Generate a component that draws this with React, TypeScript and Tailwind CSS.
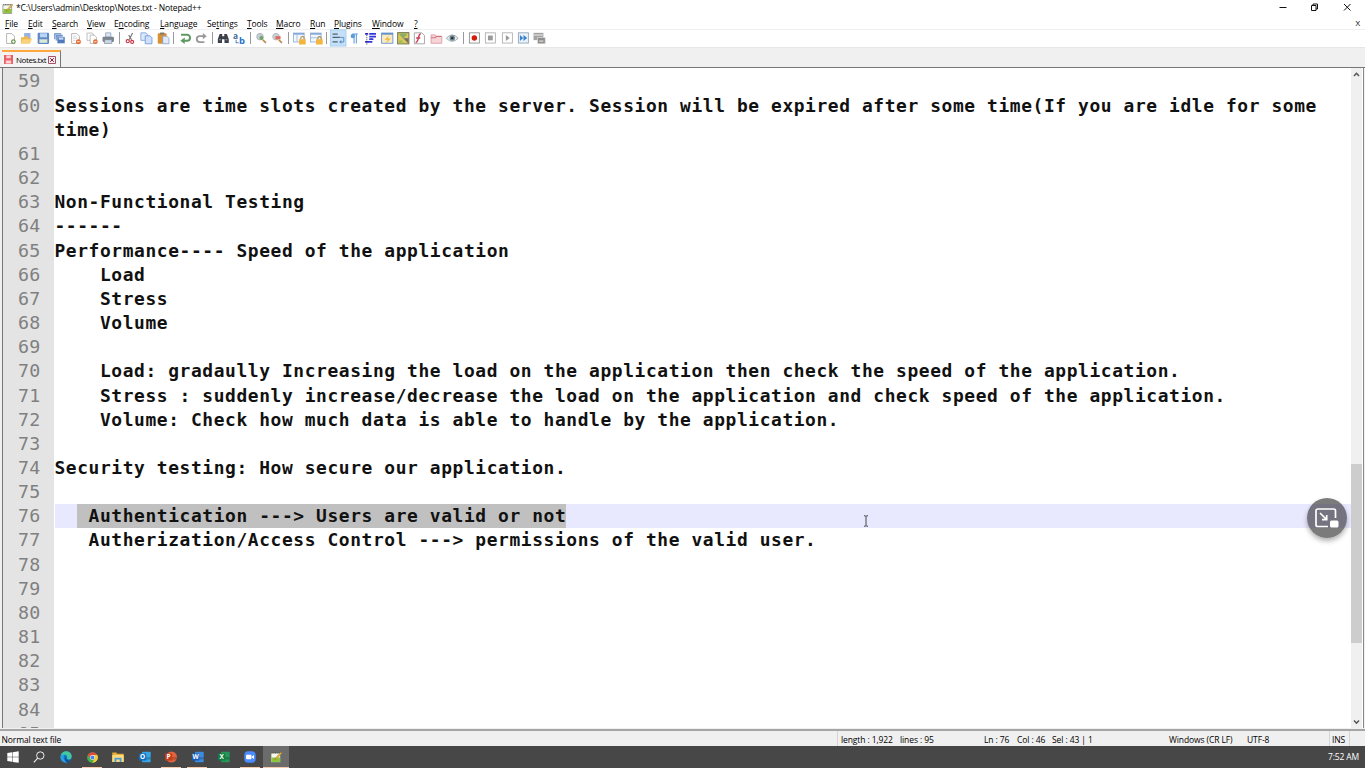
import type { ReactNode } from 'react';

type Line = { n?: number; text?: string; pre?: string; sel?: string };

const lines: Line[] = [
  { n: 59 },
  { n: 60, text: 'Sessions are time slots created by the server. Session will be expired after some time(If you are idle for some' },
  { text: 'time)' },
  { n: 61 },
  { n: 62 },
  { n: 63, text: 'Non-Functional Testing' },
  { n: 64, text: '------' },
  { n: 65, text: 'Performance---- Speed of the application' },
  { n: 66, text: '    Load' },
  { n: 67, text: '    Stress' },
  { n: 68, text: '    Volume' },
  { n: 69 },
  { n: 70, text: '    Load: gradaully Increasing the load on the application then check the speed of the application.' },
  { n: 71, text: '    Stress : suddenly increase/decrease the load on the application and check speed of the application.' },
  { n: 72, text: '    Volume: Check how much data is able to handle by the application.' },
  { n: 73 },
  { n: 74, text: 'Security testing: How secure our application.' },
  { n: 75 },
  { n: 76, pre: '  ', sel: ' Authentication ---> Users are valid or not' },
  { n: 77, text: '   Autherization/Access Control ---> permissions of the valid user.' },
  { n: 78 },
  { n: 79 },
  { n: 80 },
  { n: 81 },
  { n: 82 },
  { n: 83 },
  { n: 84 },
  { n: 85 },
];

const menus: { before?: string; key: string; after?: string; cls: string }[] = [
  { key: 'F', after: 'ile', cls: 'w-[23px]' },
  { key: 'E', after: 'dit', cls: 'w-[24px]' },
  { key: 'S', after: 'earch', cls: 'w-[35px]' },
  { key: 'V', after: 'iew', cls: 'w-[27px]' },
  { before: 'E', key: 'n', after: 'coding', cls: 'w-[46px]' },
  { key: 'L', after: 'anguage', cls: 'w-[47px]' },
  { before: 'Se', key: 't', after: 'tings', cls: 'w-[40px]' },
  { key: 'T', after: 'ools', cls: 'w-[29px]' },
  { key: 'M', after: 'acro', cls: 'w-[34px]' },
  { key: 'R', after: 'un', cls: 'w-[24px]' },
  { key: 'P', after: 'lugins', cls: 'w-[38px]' },
  { key: 'W', after: 'indow', cls: 'w-[42px]' },
  { key: '?', cls: 'w-[10px]' },
];

const page = <path d="M2.5 1.5h5l2.5 2.5v7h-7.5z" fill="#fff" stroke="#a9a9a9" strokeWidth=".8" />;
const lock = (
  <>
    <path d="M7.500 7.500V6a1.600 1.600 0 0 1 3.200 0v1.500" fill="none" stroke="#a98b4a" />
    <rect x="5.800" y="7" width="6.400" height="5" fill="#f3b63c" />
  </>
);

const icons: (ReactNode | null)[] = [
  <>{page}<circle cx="9" cy="9.300" r="2.300" fill="#6f9a58" /><path d="M9 8v2.600M7.700 9.300h2.600" stroke="#fff" strokeWidth=".8" /></>,
  <><path d="M4 1h6v7H4z" fill="#8fb2e8" /><path d="M1 5h3l1-1h3v2h3l-1.500 5H1z" fill="#f0b84c" /><path d="M2.500 7H11.500l-2 4H1z" fill="#f9d27d" /></>,
  <><rect x=".6" y=".8" width="11" height="10.600" rx="1" fill="#5f88c8" /><rect x="2.800" y="1.300" width="6.800" height="3.800" fill="#b9d6f3" /><rect x="2.300" y="7" width="7.600" height="3.400" fill="#dce9d2" /></>,
  <><rect x="1" y="1" width="7" height="6" rx=".6" fill="#7fa2d8" /><rect x="2.500" y="2.500" width="7" height="6" rx=".6" fill="#6a90cd" stroke="#fff" strokeWidth=".4" /><rect x="4" y="4.500" width="7.500" height="6.500" rx=".6" fill="#5079bb" stroke="#fff" strokeWidth=".4" /><rect x="5.500" y="5.200" width="4.500" height="2.200" fill="#c5daf2" /></>,
  <>{page}<path d="M4 4h3M4 6h4M4 8h2" stroke="#c3c3c3" strokeWidth=".7" /><circle cx="9" cy="9.300" r="2.400" fill="#e2713b" /><path d="M7.800 9.300h2.400" stroke="#fff" strokeWidth=".8" /></>,
  <><path d="M1 1h5l1 1v6H1z" fill="#fff" stroke="#aaa" strokeWidth=".7" /><path d="M4 3h4l2 2v6H4z" fill="#fff" stroke="#aaa" strokeWidth=".7" /><circle cx="9" cy="9.300" r="2.300" fill="#e2713b" /><path d="M7.900 9.300h2.200" stroke="#fff" strokeWidth=".8" /></>,
  <><path d="M3.500 .8h5v4h-5z" fill="#d9e7f6" stroke="#8897aa" strokeWidth=".7" /><rect x=".5" y="4.500" width="11" height="5" rx="1" fill="#7c858f" /><rect x="2.500" y="7.500" width="7" height="3.500" fill="#c9d7e8" stroke="#7c858f" strokeWidth=".6" /></>,
  null,
  <><path d="M8.200 1 5 7.500M4.500 3l2.800 4.500" stroke="#777" strokeWidth="1.100" /><circle cx="3.600" cy="8.800" r="1.500" fill="none" stroke="#cc3344" strokeWidth="1.100" /><circle cx="7.800" cy="9.500" r="1.400" fill="none" stroke="#cc3344" strokeWidth="1.100" /></>,
  <><path d="M.8.800h5l1.500 1.500V8H.8z" fill="#dce8fa" stroke="#7ea1dc" strokeWidth=".8" /><path d="M5 3.700h4.700L11.500 5.500v5.800H5z" fill="#cfe0fa" stroke="#6e95d6" strokeWidth=".8" /></>,
  <><rect x=".7" y="1.200" width="8.500" height="10" rx="1" fill="#d99136" /><rect x="3" y=".5" width="4" height="2" fill="#80796c" /><path d="M5.500 4h4l2 2v5.300h-6z" fill="#e1ecfb" stroke="#7d9bc7" strokeWidth=".7" /></>,
  null,
  <><path d="M2 2.700h5.800a2.800 2.800 0 0 1 0 5.600H4.500" fill="none" stroke="#5c9a61" strokeWidth="1.900" /><path d="M5.500 5.300v6.200L1.300 8.400z" fill="#5c9a61" /></>,
  <><path d="M9 9.700H4.600a2.900 2.900 0 0 1 0-5.800H8" fill="none" stroke="#999" strokeWidth="1.800" /><path d="M7.500 1 11.300 4 7.500 7z" fill="#999" /></>,
  null,
  <><path d="M2.500 2h2.500v2h2V2h2.500l1.800 5v3.500H7.200V7H4.800v3.500H.8V7z" fill="#3c4149" /><path d="M2.200 7.500h1.500M8.300 7.500h1.500" stroke="#a5b0bb" /></>,
  <><text x="0" y="6.500" fontSize="8" fontWeight="700" fill="#3f6d9b">a</text><text x="5.800" y="11.500" fontSize="9" fontWeight="700" fill="#2673c9">b</text><path d="M3 7.500v2.800h2.500" fill="none" stroke="#4a90d0" /></>,
  null,
  <><circle cx="4.800" cy="4.500" r="3.200" fill="#bfcbd6" stroke="#b5b5b5" strokeWidth=".8" /><circle cx="6.200" cy="5.800" r="1.900" fill="#6fa565" /><path d="m7.500 7.500 3 3" stroke="#c08a4e" strokeWidth="1.600" /></>,
  <><circle cx="4.800" cy="4.500" r="3.200" fill="#c9d2dc" stroke="#b5b5b5" strokeWidth=".8" /><path d="M4.200 4h5v3h-5z" fill="#df6a60" /><path d="m7.500 7.500 3 3" stroke="#c08a4e" strokeWidth="1.600" /></>,
  null,
  <><rect x=".5" y="1" width="10.200" height="8.600" fill="#f2f6fb" stroke="#8fb0da" strokeWidth=".8" /><path d="M.5 1.800h10.200" stroke="#7aa0d4" strokeWidth="1.400" /><path d="M3.800 2v7" stroke="#9db9dd" strokeWidth=".8" />{lock}</>,
  <><rect x=".5" y="1" width="10.200" height="8.600" fill="#f2f6fb" stroke="#8fb0da" strokeWidth=".8" /><path d="M.5 1.800h10.200" stroke="#7aa0d4" strokeWidth="1.400" /><path d="M.5 5.500h9" stroke="#9db9dd" strokeWidth=".8" />{lock}</>,
  null,
  <><rect x="-1.600" y="-2" width="15" height="15.500" fill="#c5e0f8" stroke="#9acbf4" strokeWidth=".8" /><path d="M.5 2h5M.5 5.200h7M.5 9.500h5" stroke="#53616f" strokeWidth="1.200" /><path d="M7.500 5.200h3.800v4.400H8.500" fill="none" stroke="#5a8cc0" strokeWidth=".9" /><path d="M9 7.700v3.600L6.800 9.600z" fill="#5a8cc0" /></>,
  <><path d="M5.800 1.500v9.500M8 1.500v9.500M4 2h5.500" stroke="#5b9bd8" strokeWidth="1" /><circle cx="4.600" cy="3.900" r="2.100" fill="#5b9bd8" /></>,
  <><path d="M1 1.800h3M5 1.800h6.500M5 4.400h6.500M5 6.900h4M1 9.500h7" stroke="#3434dd" strokeWidth="1.600" /><path d="M2.700 1v11" stroke="#222" strokeWidth=".8" strokeDasharray="1 1" /></>,
  <><rect x=".6" y="1" width="10.800" height="9.800" fill="#f8eac5" stroke="#5d8dcb" strokeWidth=".8" /><path d="M.6 1.800h10.800" stroke="#5d8dcb" strokeWidth="1.500" /><path d="m7.500 3.500-4 4h3L4.500 11l5-4.800h-3z" fill="#f1b735" /></>,
  <><rect x=".6" y=".6" width="10.800" height="10.800" fill="#d8c75b" stroke="#777c54" /><path d="m1.500 1.500 4.500 5 4-5" fill="#8aab66" /><path d="m6 6 5 5V6z" fill="#776d62" /><path d="M2 8h3v3H2z" fill="#a2bd58" /></>,
  <><path d="M1.300 .8h7.200L11 3.300v8H1.300z" fill="#fff" stroke="#999" strokeWidth=".8" /><path d="M7.500 2C4.500 1.500 6 10 2.500 10M3 5.800h4" fill="none" stroke="#cc4055" strokeWidth="1.400" /></>,
  <><path d="M1 2.800h4l1 1.200h5.300v6.800H1z" fill="#f6d5d8" stroke="#d9959d" strokeWidth=".8" /><path d="M1 5.600h4l1-1.200h5" fill="none" stroke="#d07580" /></>,
  <><path d="M.3 6Q6-.500 11.700 6 6 12 .3 6z" fill="#e9edef" stroke="#a2a8ad" strokeWidth=".9" /><circle cx="6" cy="5.800" r="2.600" fill="#66808e" /><circle cx="6" cy="5.800" r="1.100" fill="#222" /></>,
  null,
  <><rect x="1.300" y=".8" width="9.600" height="9.800" fill="#fff" stroke="#888" strokeWidth=".8" /><circle cx="6.100" cy="5.700" r="2.600" fill="#d61c0c" /></>,
  <><rect x="1.300" y=".8" width="9.600" height="9.800" fill="#fff" stroke="#aaa" strokeWidth=".8" /><rect x="3.800" y="3.400" width="4.600" height="4.600" fill="#999" /></>,
  <><rect x="1.300" y=".8" width="9.600" height="9.800" fill="#fff" stroke="#aaa" strokeWidth=".8" /><path d="M4.700 2.800v5.800l3.600-2.900z" fill="#999" /></>,
  <><rect x="1.300" y=".8" width="9.600" height="9.800" fill="#e9f3fc" stroke="#8a9db0" strokeWidth=".8" /><path d="M2.800 2.800v5.800L6 5.700zM6.200 2.800v5.800l3.600-2.900z" fill="#3b82cb" /></>,
  <><path d="M.5 .8h9.500v7H.5z" fill="#a3a3a3" /><path d="M.8 2.900h9" stroke="#e9e9e9" /><path d="M4.300 5.300h7.500v6H4.300z" fill="#8e8e8e" stroke="#e9e9e9" strokeWidth=".6" /><path d="M6 8.700h4" stroke="#eee" /></>,
];

function OfficeIcon({ letter, back, front }: { letter: string; back: string; front: string }) {
  return (
    <svg viewBox="0 0 12 12" className="size-3">
      {letter === 'P' ? <circle cx="6.500" cy="6" r="5.500" fill={back} /> : <rect x="3" y=".8" width="8.700" height="10.400" rx=".8" fill={back} />}
      <path d="M7 6h4.700v2.600H7z" fill="#000" opacity=".18" />
      <rect x="0" y="2.500" width="7.200" height="7" rx=".6" fill={front} />
      <text x="3.600" y="8.300" textAnchor="middle" fontSize="6.500" fontWeight="700" fill="#fff">{letter}</text>
    </svg>
  );
}

function NoteIcon({ className }: { className: string }) {
  return (
    <svg viewBox="0 0 12 12" className={className}>
      <path d="M1 2h9.500v9.500H1z" fill="#f7f7ee" stroke="#69705f" strokeWidth=".7" />
      <path d="M1.400 6.500h8.700V11H1.400z" fill="#8cc63f" />
      <path d="M1.500 1.800h8" stroke="#555" strokeDasharray="1 .8" />
      <path d="m11 1-5.500 6-1 2 2-.8L12 2z" fill="#efbd3e" stroke="#7a5a20" strokeWidth=".4" />
    </svg>
  );
}

const apps: { icon: ReactNode; cls: string }[] = [
  {
    icon: (
      <svg viewBox="0 0 12 12" className="size-3">
        <path d="m.3 2 4.900-.7v4.400H.3zM5.700 1.200 11.700.3v5.400h-6zM.3 6.200h4.900v4.500L.3 10zM5.700 6.200h6v5.500l-6-.8z" fill="#fff" />
      </svg>
    ),
    cls: 'w-[26px]',
  },
  {
    icon: (
      <svg viewBox="0 0 12 12" className="size-3">
        <circle cx="7.300" cy="4.500" r="3.700" fill="none" stroke="#eee" strokeWidth="1" />
        <path d="M4.700 7.200.8 11.400" stroke="#eee" strokeWidth="1.100" />
      </svg>
    ),
    cls: 'w-[26px]',
  },
  {
    icon: (
      <svg viewBox="0 0 12 12" className="size-3">
        <circle cx="6" cy="6" r="5.700" fill="#1476c6" />
        <path d="M.5 5.500C1 2 3.500.3 6.200.3c3.500 0 5.600 2.700 5.500 5.200-.1 2-1.500 2.800-3.200 2.800-1.500 0-1.900-.7-1.500-1.300C8 5.300 6 3.500 4 3.700 2.500 3.800 1 4.600.5 5.500z" fill="#42c8a1" />
        <path d="M.5 5.500C1.300 3.800 3 3.400 4.500 3.800 2.800 5.500 3.500 9.500 7.500 11.500 3.500 12 0 9.500.5 5.500z" fill="#2aa0e6" />
        <path d="M6.500 5.800c-1.500 2 .5 4 4 3.200-1 1.600-2.200 2.400-3.500 2.500-2.500-1.400-3-4.500-.5-5.700z" fill="#0f4f99" />
      </svg>
    ),
    cls: 'w-[27px]',
  },
  {
    icon: (
      <svg viewBox="0 0 12 12" className="size-[11px]">
        <circle cx="6" cy="6" r="5.800" fill="#4caf50" />
        <path d="M1 3.100A5.800 5.800 0 0 1 11.200 3.300H6L3.600 7.400z" fill="#e34a3b" />
        <path d="M11.200 3.300A5.800 5.800 0 0 1 5.800 11.800L8.400 7.400 6 3.300z" fill="#fbc934" />
        <circle cx="6" cy="6" r="2.700" fill="#fff" />
        <circle cx="6" cy="6" r="2.100" fill="#4285f4" />
      </svg>
    ),
    cls: 'w-[26px]',
  },
  {
    icon: (
      <svg viewBox="0 0 12 12" className="size-3">
        <path d="M.3 1.500h4l1 1.200h6.400V11H.3z" fill="#e8ae35" />
        <path d="M.3 4h11.400v7H.3z" fill="#fbdb7b" />
        <path d="M2.500 6.700h7V11H7.700V8.500H4.300V11H2.500z" fill="#4e9bd8" />
      </svg>
    ),
    cls: 'w-[26px]',
  },
  { icon: <OfficeIcon letter="O" back="#35a5e8" front="#0f6cbd" />, cls: 'w-[27px]' },
  { icon: <OfficeIcon letter="P" back="#e2633f" front="#c43e1c" />, cls: 'w-[26px]' },
  { icon: <OfficeIcon letter="W" back="#3a8de0" front="#185abd" />, cls: 'w-[27px]' },
  { icon: <OfficeIcon letter="X" back="#25965b" front="#107c41" />, cls: 'w-[26px]' },
  {
    icon: (
      <svg viewBox="0 0 12 12" className="size-3">
        <rect x=".3" y=".3" width="11.400" height="11.400" rx="4" fill="#4a8cff" />
        <rect x="2" y="3.800" width="5.500" height="4.400" rx="1" fill="#fff" />
        <path d="m8 5.500 2-1.500v4L8 6.500z" fill="#fff" />
      </svg>
    ),
    cls: 'w-[26px]',
  },
];

const underlined = [3, 6, 7, 9];

export default function App() {
  return (
    <div className="flex h-[768px] w-[1365px] flex-col overflow-hidden bg-white font-['Open_Sans','Noto_Sans',sans-serif] text-[8.5px] text-black">
      <header className="flex h-[16px] shrink-0 items-center pl-[2px]">
        <NoteIcon className="size-[11px]" />
        <span className="ml-[3px] grow whitespace-pre pt-px tracking-[-0.16px]">*C:\Users\admin\Desktop\Notes.txt - Notepad++</span>
        <svg viewBox="0 0 86 16" className="h-4 w-[86px]" fill="none" stroke="#111" strokeWidth="1">
          <path d="M.5 7.500h7M32.500 5.500h4.500v5h-4.500zM34 5.500V4h4.500v5H37M65 4l6.500 6.500M71.500 4 65 10.500" />
        </svg>
      </header>
      <nav className="flex h-[13px] shrink-0 items-center pl-[5px] pt-px tracking-[-0.12px]">
        {menus.map((m) => (
          <span key={m.key + m.after} className={`${m.cls} shrink-0 whitespace-nowrap leading-[13px]`}>
            {m.before}
            <span className="underline decoration-[0.7px] underline-offset-1">{m.key}</span>
            {m.after}
          </span>
        ))}
        <span className="ml-auto pr-[5px] text-[8px]">X</span>
      </nav>
      <div className="flex h-[18px] shrink-0 items-center border-t border-[#efefef] pb-px pl-[2px]">
        {icons.map((icon, i) =>
          icon === null ? (
            <span key={i} className="flex w-[5.6px] shrink-0 justify-center">
              <span className="h-3 w-px bg-[#999]" />
            </span>
          ) : (
            <span key={i} className="flex w-[16.35px] shrink-0 justify-center">
              <svg viewBox="0 0 12 12" className="size-[12.5px] overflow-visible">{icon}</svg>
            </span>
          ),
        )}
      </div>
      <div className="flex h-[20px] shrink-0 items-end border-t border-[#e6e6e6] bg-[#f0f0f0] pl-[2px]">
        <div className="flex h-[17px] w-[59px] items-center border-r border-t-2 border-r-[#777] border-t-[#ffa63d] bg-[#f4f4f4] pl-[2px]">
          <svg viewBox="0 0 10 10" className="size-[9px] shrink-0">
            <path d="M0 0h10v10H0z" fill="#e96066" />
            <path d="M2.500.5h5v3h-5zM2 6h6v3.500H2z" fill="#fbd3d4" />
          </svg>
          <span className="ml-[3px] w-[31px] whitespace-nowrap text-[8px] tracking-[-0.42px]">Notes.txt</span>
          <svg viewBox="0 0 8 8" className="ml-px size-[8px] shrink-0">
            <path d="M.5.5h7v7h-7z" fill="#f9ebee" stroke="#a3526a" />
            <path d="m2.200 2.200 3.600 3.600M5.800 2.200 2.200 5.800" stroke="#7c2440" />
          </svg>
        </div>
      </div>

      <main className="relative flex h-[662px] shrink-0 border-t border-[#777] bg-[#f0f0f0] pl-[2px] pr-[1px]">
        <div className="flex h-[660px] grow overflow-hidden border-l border-r border-l-[#777] border-r-[#888] bg-white pr-[1px]">
          <div className="flex h-full grow flex-col overflow-hidden bg-[linear-gradient(to_right,#e4e4e4_51px,#ffffff_51px)] pt-[1.4px] font-['DejaVu_Sans_Mono','Liberation_Mono',monospace]">
            {lines.map((l, i) => (
              <div key={i} className="flex h-[24.17px] shrink-0 items-center leading-[24px]">
                <span className="w-[51.5px] shrink-0 pl-[15px] text-[18.3px] tracking-[0.36px] text-[#808080]">{l.n}</span>
                <div className={`flex h-full grow items-center whitespace-pre text-[17.9px] font-bold tracking-[0.602px] text-[#111] ${l.sel ? 'bg-[#e8e8ff]' : ''}`}>
                  {l.text}
                  {l.pre && <span>{l.pre}</span>}
                  {l.sel && <span className="h-full bg-[#c0c0c0]">{l.sel}</span>}
                </div>
              </div>
            ))}
          </div>
          <div className="flex w-[11px] shrink-0 flex-col bg-[#f0f0f0]">
            <svg viewBox="0 0 11 12" className="h-3 w-[11px]"><path d="m3 8 2.500-2.700L8 8" fill="none" stroke="#555" strokeWidth="1.500" /></svg>
            <div className="mt-[384px] h-[179px] bg-[#cdcdcd]" />
            <div className="grow" />
            <svg viewBox="0 0 11 12" className="h-3 w-[11px]"><path d="m3 4.500 2.500 2.700L8 4.500" fill="none" stroke="#555" strokeWidth="1.500" /></svg>
          </div>
        </div>
        <svg viewBox="0 0 6 12" className="absolute left-[863px] top-[447px] h-3 w-[6px]" fill="none" stroke="#333" strokeWidth=".9">
          <path d="M1 .8h1.500L3 1.300l.5-.5H5M3 1.300v9.400M1 11.200h1.500l.5-.5.5.5H5" />
        </svg>
        <div className="absolute left-[1307px] top-[430px] flex size-[40px] items-center justify-center rounded-full bg-[linear-gradient(to_bottom,#7b7b7b_6px,#74737f_6px,#74737f_30px,#7b7b7b_30px)] shadow-[0_3px_5px_rgba(0,0,0,0.3)]">
          <svg viewBox="0 0 24 20" className="h-[20px] w-[24px]" fill="none" stroke="#fff" strokeWidth="1.700">
            <path d="M13 18.500H2.800Q1 18.500 1 16.700V2.800Q1 1 2.800 1h16Q20.500 1 20.500 2.800V10" />
            <path d="m5 5 6.500 6.500M11.700 7v4.700H7" />
            <rect x="15" y="12.500" width="8.500" height="7" rx="1.500" fill="#fff" stroke="none" />
          </svg>
        </div>
      </main>

      <div className="flex h-[17px] shrink-0 items-center border-t-2 border-[#a5a5a5] bg-[#f0f0f0] leading-[15px] tracking-[-0.1px]">
        <span className="w-[838px] border-r border-[#d5d5d5] pl-[1.5px] pt-px">Normal text file</span>
        <span className="w-[62px] pl-[3px] pt-px">length : 1,922</span>
        <span className="w-[84px] pt-px">lines : 95</span>
        <span className="w-[33px] pt-px">Ln : 76</span>
        <span className="w-[35px] pt-px">Col : 46</span>
        <span className="w-[117px] pt-px">Sel : 43 | 1</span>
        <span className="w-[78px] pt-px">Windows (CR LF)</span>
        <span className="w-[82px] pt-px">UTF-8</span>
        <span className="w-[21px] border-x border-[#d5d5d5] pl-[2px] pt-px">INS</span>
      </div>

      <footer className="flex h-[22px] shrink-0 items-stretch bg-[#474747]">
        {apps.map((a, i) => (
          <div key={i} className={`${a.cls} relative flex shrink-0 items-center justify-center`}>
            {a.icon}
            {underlined.includes(i) && <span className="absolute bottom-0 left-[3px] h-px w-5 bg-[#f5c9ab]" />}
          </div>
        ))}
        <div className="flex w-[26px] items-center justify-center border-b border-[#f5c9ab] bg-[#6b6b6b]">
          <NoteIcon className="size-3" />
        </div>
        <span className="ml-auto pr-[6px] leading-[22px] tracking-[-0.15px] text-white">7:52 AM</span>
      </footer>
    </div>
  );
}
